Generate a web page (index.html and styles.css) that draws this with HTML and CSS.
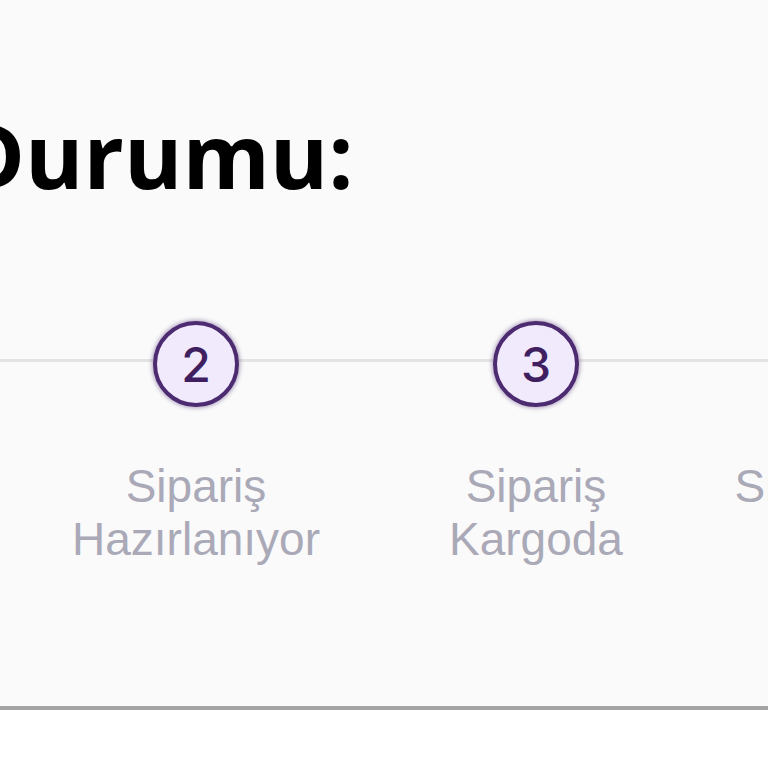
FILE: index.html
```html
<!DOCTYPE html>
<html lang="tr">
<head>
  <meta charset="UTF-8" />
  <meta name="viewport" content="width=device-width, initial-scale=1.0"/>
  <title>Sipariş Durumu</title>
  <link rel="stylesheet" href="styles.css">
</head>
<body>
  <div class="status-card">
    <h1 class="status-title">Sipariş Durumu:</h1>

    <div class="steps">
      <div class="step">
        <div class="step-circle">1</div>
        <div class="step-label">Sipariş Alındı</div>
      </div>
      <div class="step">
        <div class="step-circle">2</div>
        <div class="step-label">Sipariş Hazırlanıyor</div>
      </div>
      <div class="step">
        <div class="step-circle">3</div>
        <div class="step-label">Sipariş Kargoda</div>
      </div>
      <div class="step">
        <div class="step-circle">4</div>
        <div class="step-label">Sipariş Teslim Edildi</div>
      </div>
    </div>
  </div>
</body>
</html>
```

FILE: styles.css
```css
body {
  margin: 0;
  background-color: #fff;
  font-family: 'Liberation Sans', Arial, sans-serif;
  overflow: hidden;
}

.status-card {
  height: 710px;
  box-sizing: border-box;
  background-color: #fafafa;
  border-bottom: 4px solid #a4a4a4;
  box-shadow: 0 1px 0 #dadada;
  padding-top: 110px;
  overflow: hidden;
}

.status-title {
  margin: 0 0 0 -362px;
  font-family: 'Open Sans', sans-serif;
  font-weight: bold;
  font-size: 89px;
  line-height: 1;
  color: #000;
  white-space: nowrap;
}

.steps {
  position: relative;
  display: flex;
  width: 1360px;
  margin-left: -314px;
  margin-top: 122px;
}

/* gray track behind the circles */
.steps::before {
  content: "";
  position: absolute;
  left: 0;
  right: 0;
  top: 38px;
  height: 3px;
  background-color: #e3e3e3;
}

.step {
  position: relative;
  width: 340px;
  display: flex;
  flex-direction: column;
  align-items: center;
}

.step-circle {
  width: 78px;
  height: 78px;
  border: 4px solid #4d2b70;
  border-radius: 50%;
  background-color: #f1e9fc;
  box-shadow: 0 0 4px 1px rgba(77, 43, 112, 0.45);
  display: flex;
  align-items: center;
  justify-content: center;
  font-family: 'Inter', sans-serif;
  font-weight: 500;
  font-size: 48px;
  color: #3f1f60;
}

.step-label {
  width: 300px;
  margin-top: 53px;
  text-align: center;
  font-size: 46px;
  line-height: 53px;
  color: #aaa9b7;
}
```
